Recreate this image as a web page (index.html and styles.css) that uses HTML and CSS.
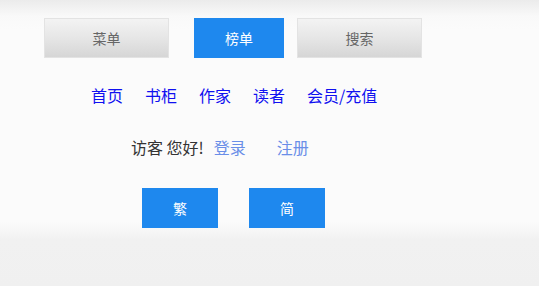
FILE: index.html
```html
<!DOCTYPE html>
<html lang="zh-CN">
<head>
<meta charset="utf-8">
<title>菜单</title>
<link rel="stylesheet" href="styles.css">
</head>
<body>
<div class="page">
  <div class="tabs">
    <a class="tab tab-gray tab-menu">菜单</a>
    <a class="tab tab-blue tab-rank">榜单</a>
    <a class="tab tab-gray tab-search">搜索</a>
  </div>
  <nav class="nav">
    <a class="nav-link">首页</a>
    <a class="nav-link">书柜</a>
    <a class="nav-link">作家</a>
    <a class="nav-link">读者</a>
    <a class="nav-link">会员/充值</a>
  </nav>
  <div class="visitor">
    <span class="greet">访客 您好!</span>
    <a class="login">登录</a>
    <a class="register">注册</a>
  </div>
  <div class="lang">
    <a class="lang-btn">繁</a>
    <a class="lang-btn lang-jian">简</a>
  </div>
</div>
</body>
</html>
```
FILE: styles.css
```css
html, body {
  margin: 0;
  padding: 0;
  height: 100%;
}
body {
  font-family: "Noto Sans CJK SC", "Microsoft YaHei", sans-serif;
  background: linear-gradient(to bottom,
    #ebebeb 0px, #f9f9f9 16px, #fbfbfb 30px,
    #fbfbfb 222px, #f1f1f1 240px, #f0f0f0 100%);
}
.page {
  display: flex;
  flex-direction: column;
}
.tabs {
  display: flex;
  padding: 18px 0 0 44px;
}
.tab {
  box-sizing: border-box;
  height: 40px;
  display: flex;
  align-items: center;
  justify-content: center;
  font-size: 14px;
}
.tab-gray {
  width: 125px;
  border: 1px solid #e3e3e3;
  background: linear-gradient(to bottom, #f3f3f3 0%, #e6e6e6 50%, #d6d6d6 100%);
  color: #666;
}
.tab-blue {
  width: 90px;
  background: #1e88ee;
  color: #fff;
}
.tab-rank { margin-left: 25px; }
.tab-search { margin-left: 13px; }

.nav {
  display: flex;
  gap: 22px;
  padding-left: 91px;
  margin-top: 27px;
  font-size: 16px;
  line-height: 20px;
}
.nav-link {
  color: #1010f0;
}

.visitor {
  display: flex;
  padding-left: 131px;
  margin-top: 32px;
  font-size: 16px;
  line-height: 20px;
}
.greet { color: #333; }
.login { color: #6a8ee8; margin-left: 10px; }
.register { color: #6a8ee8; margin-left: 31px; }

.lang {
  display: flex;
  gap: 31px;
  padding-left: 142px;
  margin-top: 31px;
}
.lang-btn {
  width: 76px;
  height: 40px;
  display: flex;
  align-items: center;
  justify-content: center;
  background: #1e88ee;
  color: #fff;
  font-size: 14px;
}
```
